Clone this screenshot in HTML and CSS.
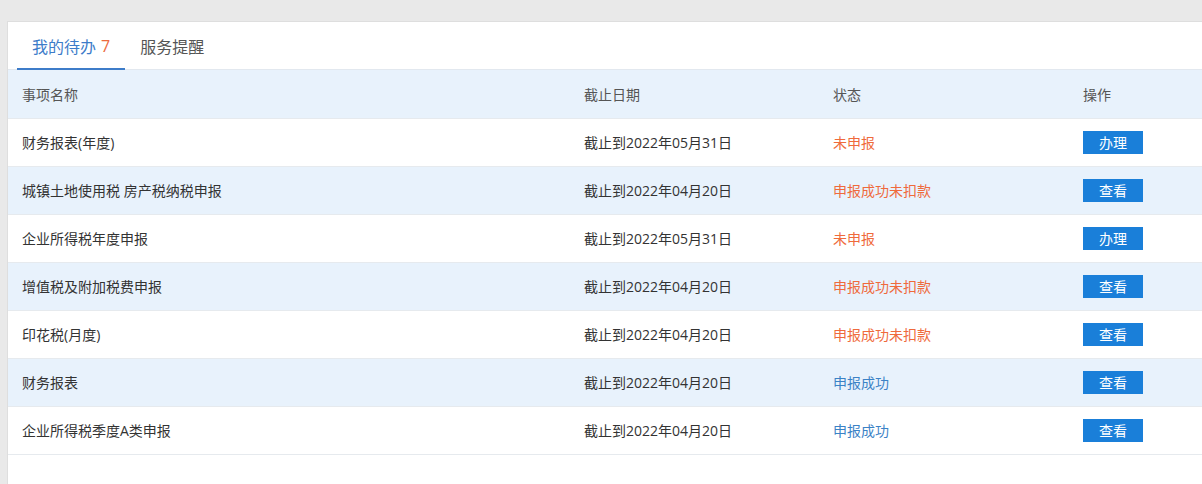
FILE: index.html
```html
<!DOCTYPE html>
<html lang="zh-CN">
<head>
    <meta charset="UTF-8">
    <meta name="viewport" content="width=device-width, initial-scale=1.0">
    <title>我的待办</title>
    <link rel="stylesheet" href="styles.css">
</head>
<body>
    <section class="panel">
        <nav class="tabs">
            <a class="tab active" href="#">我的待办 <span class="count">7</span></a>
            <a class="tab" href="#">服务提醒</a>
        </nav>

        <table class="todo">
            <colgroup>
                <col class="c-name">
                <col class="c-date">
                <col class="c-state">
                <col class="c-op">
            </colgroup>
            <thead>
                <tr>
                    <th>事项名称</th>
                    <th>截止日期</th>
                    <th>状态</th>
                    <th>操作</th>
                </tr>
            </thead>
            <tbody>
                <tr>
                    <td>财务报表(年度)</td>
                    <td>截止到2022年05月31日</td>
                    <td class="st-red">未申报</td>
                    <td><button class="btn">办理</button></td>
                </tr>
                <tr>
                    <td>城镇土地使用税 房产税纳税申报</td>
                    <td>截止到2022年04月20日</td>
                    <td class="st-red">申报成功未扣款</td>
                    <td><button class="btn">查看</button></td>
                </tr>
                <tr>
                    <td>企业所得税年度申报</td>
                    <td>截止到2022年05月31日</td>
                    <td class="st-red">未申报</td>
                    <td><button class="btn">办理</button></td>
                </tr>
                <tr>
                    <td>增值税及附加税费申报</td>
                    <td>截止到2022年04月20日</td>
                    <td class="st-red">申报成功未扣款</td>
                    <td><button class="btn">查看</button></td>
                </tr>
                <tr>
                    <td>印花税(月度)</td>
                    <td>截止到2022年04月20日</td>
                    <td class="st-red">申报成功未扣款</td>
                    <td><button class="btn">查看</button></td>
                </tr>
                <tr>
                    <td>财务报表</td>
                    <td>截止到2022年04月20日</td>
                    <td class="st-blue">申报成功</td>
                    <td><button class="btn">查看</button></td>
                </tr>
                <tr>
                    <td>企业所得税季度A类申报</td>
                    <td>截止到2022年04月20日</td>
                    <td class="st-blue">申报成功</td>
                    <td><button class="btn">查看</button></td>
                </tr>
            </tbody>
        </table>
    </section>
</body>
</html>
```

FILE: styles.css
```css
html{
    box-sizing: border-box;
    font-family: "Open Sans", "Noto Sans CJK SC", sans-serif;
    font-size: 14px;
}

*, *::after, *::before{
    box-sizing: inherit;
}

body{
    margin: 0;
    min-height: 100vh;
    overflow: hidden;
    background-color: #e9e9e9;
    color: #333;
}

/* el panel sigue fuera del borde derecho */
.panel{
    min-height: 470px;
    margin: 21px 0 0 7px;
    background-color: #fff;
    border: 1px solid #dedede;
    border-right: 0;
}

.tabs{
    display: flex;
    padding-left: 9px;
    height: 48px;
    border-bottom: 1px solid #e2e8ef;
}

.tab{
    display: flex;
    align-items: center;
    padding: 2px 15px 0;
    font-size: 16px;
    color: #555;
    text-decoration: none;
    border-bottom: 2px solid transparent;
    margin-bottom: -1px;
}

.tab.active{
    color: #3d7cc9;
    border-bottom-color: #3d7cc9;
}

.tab .count{
    margin-left: 5px;
    color: #ec6a3d;
}

.todo{
    width: 100%;
    border-collapse: collapse;
    table-layout: fixed;
}

.c-name{ width: 562px; }
.c-date{ width: 249px; }
.c-state{ width: 250px; }
.c-op{ width: auto; }

.todo th,
.todo td{
    height: 48px;
    padding: 0 14px;
    text-align: left;
    font-weight: normal;
    white-space: nowrap;
    border-bottom: 1px solid #e6eaee;
}

.todo th{
    color: #555;
    background-color: #e8f2fc;
}

.todo tbody tr:nth-child(even){
    background-color: #e8f2fc;
}

.st-red{
    color: #ef6a3c;
}

.st-blue{
    color: #3b82c6;
}

.btn{
    width: 60px;
    height: 23px;
    padding: 0;
    border: 0;
    font-family: inherit;
    font-size: 14px;
    line-height: 23px;
    color: #fff;
    background-color: #1a7fd9;
    cursor: pointer;
}
```
